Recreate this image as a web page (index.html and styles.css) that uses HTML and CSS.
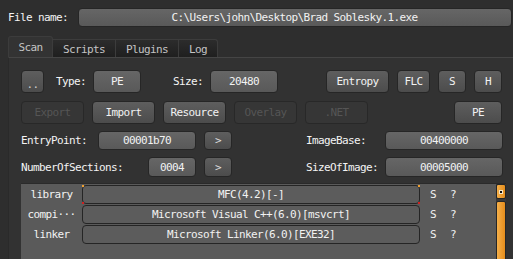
FILE: index.html
```html
<!DOCTYPE html>
<html>
<head>
<meta charset="UTF-8">
<title>Detect It Easy</title>
<link rel="stylesheet" href="styles.css">
</head>
<body>
<div id="file-row">
    <span class="label">File name:</span>
    <div id="file-name" class="field">C:\Users\john\Desktop\Brad Soblesky.1.exe</div>
</div>

<div id="tabs">
    <div class="tab tab-active">Scan</div>
    <div class="tab tab-scripts">Scripts</div>
    <div class="tab tab-plugins">Plugins</div>
    <div class="tab tab-log">Log</div>
</div>

<div id="panel">
    <div class="row row-top">
        <div class="btn btn-dots">..</div>
        <span class="label label-type">Type:</span>
        <div class="field field-type">PE</div>
        <span class="label label-size">Size:</span>
        <div class="field field-size">20480</div>
        <div class="btn btn-entropy">Entropy</div>
        <div class="btn btn-flc">FLC</div>
        <div class="btn btn-small">S</div>
        <div class="btn btn-small">H</div>
    </div>

    <div class="row row-actions">
        <div class="btn btn-wide btn-off">Export</div>
        <div class="btn btn-wide">Import</div>
        <div class="btn btn-wide">Resource</div>
        <div class="btn btn-wide btn-off">Overlay</div>
        <div class="btn btn-wide btn-off">.NET</div>
        <div class="btn btn-pe">PE</div>
    </div>

    <div class="row row-info row-entry">
        <div class="info-left">
            <span class="label">EntryPoint:</span>
            <div class="field field-entry">00001b70</div>
        </div>
        <div class="btn btn-arrow">&gt;</div>
        <span class="label label-right">ImageBase:</span>
        <div class="field field-right">00400000</div>
    </div>

    <div class="row row-info row-sections">
        <div class="info-left">
            <span class="label">NumberOfSections:</span>
            <div class="field field-sections">0004</div>
        </div>
        <div class="btn btn-arrow">&gt;</div>
        <span class="label label-right">SizeOfImage:</span>
        <div class="field field-right">00005000</div>
    </div>

    <div id="result-list">
        <div class="result-rows">
            <div class="result-row result-selected">
                <span class="result-type">library</span>
                <div class="result-name">MFC(4.2)[-]
                    <i class="mark mark-tl"></i><i class="mark mark-bl"></i>
                    <i class="mark mark-tr"></i><i class="mark mark-br"></i>
                </div>
                <span class="result-s">S</span>
                <span class="result-q">?</span>
            </div>
            <div class="result-row">
                <span class="result-type">compi&middot;&middot;&middot;</span>
                <div class="result-name">Microsoft Visual C++(6.0)[msvcrt]</div>
                <span class="result-s">S</span>
                <span class="result-q">?</span>
            </div>
            <div class="result-row">
                <span class="result-type">linker</span>
                <div class="result-name">Microsoft Linker(6.0)[EXE32]</div>
                <span class="result-s">S</span>
                <span class="result-q">?</span>
            </div>
        </div>
        <div id="scrollbar">
            <div class="scroll-arrow"><i class="scroll-dot"></i></div>
            <div class="scroll-thumb"></div>
        </div>
    </div>
</div>
</body>
</html>
```

FILE: styles.css
```css
html, body {
    margin: 0;
    height: 100%;
    overflow: hidden;
}

body {
    font-family: "DejaVu Sans Mono", "Liberation Mono", monospace;
    font-size: 11px;
    letter-spacing: -0.62px;
    color: #f2f2f2;
    background-color: #2e2e2e;
}

.label {
    white-space: nowrap;
    color: #f4f4f4;
}

.field {
    box-sizing: border-box;
    background: linear-gradient(#666666, #595959);
    border: 1px solid #262626;
    border-radius: 4px;
    display: flex;
    align-items: center;
    justify-content: center;
    white-space: nowrap;
}

.btn {
    box-sizing: border-box;
    height: 23px;
    background: linear-gradient(#5e5e5e, #4c4c4c);
    border: 1px solid #262626;
    border-radius: 4px;
    display: flex;
    align-items: center;
    justify-content: center;
    white-space: nowrap;
}

.btn-off {
    background: #363636;
    border-color: #282828;
    color: #555555;
}

/* file name */
#file-row {
    display: flex;
    align-items: center;
    padding: 8px 0 0 8px;
    height: 19px;
}

#file-name {
    margin-left: 10px;
    width: 434px;
    height: 19px;
    padding-right: 1px;
}

/* tabs */
#tabs {
    display: flex;
    align-items: flex-end;
    margin: 9px 0 0 8px;
    height: 21px;
}

.tab {
    box-sizing: border-box;
    height: 18px;
    border: 1px solid #3c3c3c;
    border-bottom: none;
    border-left: none;
    background: linear-gradient(#2c2c2c, #1f1f1f);
    color: #c4c4c4;
    display: flex;
    align-items: center;
    justify-content: center;
    padding-top: 1px;
}

.tab-active {
    width: 45px;
    height: 21px;
    background: #333333;
    border-left: 1px solid #3c3c3c;
    border-radius: 3px 3px 0 0;
    padding-top: 0;
}

.tab-scripts,
.tab-plugins {
    width: 63px;
}

.tab-log {
    width: 39px;
    border-radius: 0 3px 0 0;
}

/* tab page */
#panel {
    margin-left: 8px;
    height: 200px;
    background-color: #323232;
    border-top: 1px solid #454545;
    border-left: 1px solid #2a2a2a;
    padding: 12px 0 0 12px;
}

.row {
    display: flex;
    align-items: center;
}

.row-top .btn {
    margin-right: 8px;
}

.btn-dots {
    width: 23px;
    padding-top: 6px;
    color: #cccccc;
}

.label-type {
    margin-left: 4px;
    width: 37px;
}

.field-type {
    width: 48px;
    height: 23px;
}

.label-size {
    margin-left: 32px;
    width: 37px;
}

.field-size {
    width: 68px;
    height: 23px;
}

.btn-entropy {
    margin-left: 48px;
    width: 63px;
}

.btn-flc {
    width: 33px;
}

.btn-small {
    width: 28px;
}

.row-actions {
    margin-top: 8px;
}

.btn-wide {
    width: 63px;
    margin-right: 8px;
}

.btn-pe {
    margin-left: 78px;
    width: 48px;
}

.row-info {
    height: 19px;
}

.row-entry {
    margin-top: 7px;
}

.row-sections {
    margin-top: 7px;
    height: 20px;
}

.info-left {
    width: 175px;
    height: 100%;
    display: flex;
    align-items: center;
    justify-content: space-between;
}

.field-entry {
    width: 98px;
    height: 100%;
}

.field-sections {
    width: 48px;
    height: 100%;
}

.btn-arrow {
    margin-left: 8px;
    width: 28px;
    height: 100%;
    color: #dddddd;
}

.label-right {
    margin-left: 74px;
    width: 79px;
}

.field-right {
    width: 118px;
    height: 100%;
}

/* scan results */
#result-list {
    margin-top: 6px;
    width: 485px;
    height: 80px;
    display: flex;
    background-color: #5a5a5a;
    border-top: 1px solid #2a2a2a;
}

.result-rows {
    flex: 1;
    padding-top: 0;
}

.result-row {
    display: flex;
    align-items: center;
    height: 20px;
}

.result-type {
    width: 61px;
    text-align: center;
    white-space: nowrap;
}

.result-name {
    position: relative;
    box-sizing: border-box;
    width: 338px;
    height: 19px;
    border: 1px solid #252525;
    border-radius: 4px;
    background-color: #5c5c5c;
    display: flex;
    align-items: center;
    justify-content: center;
    white-space: nowrap;
}

.mark {
    position: absolute;
    width: 2px;
    height: 2px;
}

.mark-tl { left: -1px; top: -1px; background: #f0a030; }
.mark-tr { right: -1px; top: -1px; background: #f0a030; }
.mark-bl { left: -1px; bottom: -1px; background: #d02020; }
.mark-br { right: -1px; bottom: -1px; background: #d02020; }

.result-s {
    margin-left: 10px;
    width: 20px;
}

.result-q {
    width: 20px;
}

#scrollbar {
    width: 10px;
    margin-right: 0;
    background-color: #3a3a3a;
    display: flex;
    flex-direction: column;
    gap: 2px;
    padding: 0 0 0 0;
}

.scroll-arrow {
    box-sizing: border-box;
    height: 15px;
    background: linear-gradient(90deg, #f6b04a, #e58d1c);
    border: 1px solid #262626;
    border-radius: 2px;
    display: flex;
    align-items: center;
    justify-content: center;
}

.scroll-dot {
    width: 2px;
    height: 2px;
    background: #111111;
    border: 1px solid #f8e8c8;
}

.scroll-thumb {
    flex: 1;
    background: linear-gradient(90deg, #f6b04a, #e58d1c);
    border: 1px solid #262626;
    border-radius: 2px;
}
```
